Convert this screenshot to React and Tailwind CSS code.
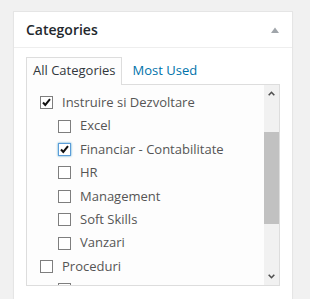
const Check = () => (
  <svg width="11" height="11" viewBox="0 0 11 11" className="block">
    <path d="M2 5.5 L4.3 8 L9 2.2" fill="none" stroke="#111" strokeWidth="2" />
  </svg>
);

function Box({ checked, focus }) {
  return (
    <span
      className={
        "flex h-[13px] w-[13px] shrink-0 items-center justify-center border bg-white " +
        (focus
          ? "border-[#5b9dd9] shadow-[0_0_2px_rgba(30,140,190,0.8)]"
          : "border-[#7e7e7e]")
      }
    >
      {checked && <Check />}
    </span>
  );
}

function Row({ label, checked, focus, child }) {
  return (
    <div className={"flex h-[23.4px] items-center gap-[9px] " + (child ? "ml-[18px]" : "")}>
      <Box checked={checked} focus={focus} />
      {label && <span className="whitespace-nowrap text-[13px] text-[#555]">{label}</span>}
    </div>
  );
}

export default function App() {
  return (
    <div className="h-[299px] w-[310px] overflow-hidden bg-[#f1f1f1] pl-[13px] pt-[11px] font-['Open_Sans',sans-serif]">
      <div className="h-[300px] w-[280px] border border-[#e5e5e5] bg-white shadow-[0_1px_1px_rgba(0,0,0,0.04)]">
        {/* HEADER */}
        <div className="flex h-[36px] items-center justify-between border-b border-[#eee] pl-[12px] pr-[13px]">
          <h2 className="text-[14px] font-semibold text-[#23282d]">Categories</h2>
          <svg width="8" height="6" viewBox="0 0 8 6">
            <polygon points="0,6 4,0.5 8,6" fill="#a0a5aa" />
          </svg>
        </div>

        {/* BODY */}
        <div className="px-[12px] pt-[9px]">
          <div className="relative z-10 -mb-px flex h-[28px] items-start text-[13px]">
            <div className="h-[28px] border border-b-0 border-[#ddd] bg-[#fdfdfd] px-[6px] pt-[3px] text-[#32373c]">
              All Categories
            </div>
            <div className="pl-[10px] pt-[4px] text-[#0073aa]">Most Used</div>
          </div>

          <div className="flex h-[202px] border border-[#ddd] bg-[#fdfdfd]">
            <div className="flex-1 overflow-hidden pl-[13px] pt-[6px]">
              <Row label="Instruire si Dezvoltare" checked />
              <Row label="Excel" child />
              <Row label="Financiar - Contabilitate" checked focus child />
              <Row label="HR" child />
              <Row label="Management" child />
              <Row label="Soft Skills" child />
              <Row label="Vanzari" child />
              <Row label="Proceduri" />
              <Row child />
            </div>

            {/* SCROLLBAR */}
            <div className="flex w-[15px] flex-col bg-[#f1f1f1]">
              <div className="flex h-[17px] items-center justify-center">
                <svg width="7" height="5" viewBox="0 0 7 5">
                  <polyline points="0.7,4.3 3.5,1.3 6.3,4.3" fill="none" stroke="#505050" strokeWidth="1.6" />
                </svg>
              </div>
              <div className="h-[30px]" />
              <div className="h-[92px] bg-[#c1c1c1]" />
              <div className="flex-1" />
              <div className="flex h-[17px] items-center justify-center">
                <svg width="7" height="5" viewBox="0 0 7 5">
                  <polyline points="0.7,0.7 3.5,3.7 6.3,0.7" fill="none" stroke="#505050" strokeWidth="1.6" />
                </svg>
              </div>
            </div>
          </div>
        </div>
      </div>
    </div>
  );
}
